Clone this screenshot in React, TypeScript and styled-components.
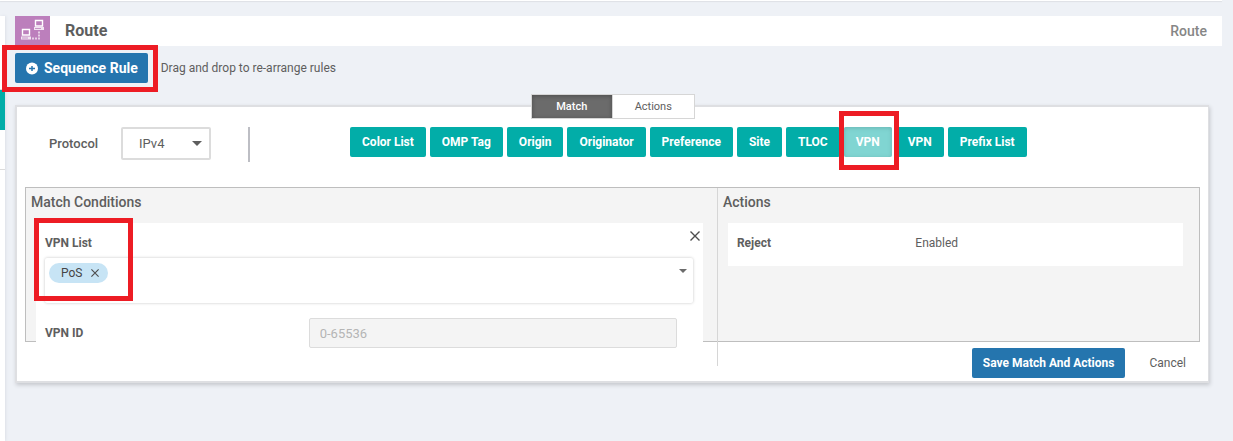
import React from "react";
import styled, { createGlobalStyle, css } from "styled-components";

const GlobalStyle = createGlobalStyle`
  * { box-sizing: border-box; }
  html, body, #root { min-height: 100%; }
  body {
    margin: 0;
    background: #eef1f6;
    color: #5e5e5e;
    font-family: Roboto, "Liberation Sans", sans-serif;
    font-size: 13px;
    line-height: 16px;
  }
  button, input, select { font: inherit; color: inherit; margin: 0; }
  h1, h2, p { margin: 0; }
`;

const Page = styled.div`
  display: grid;
  grid-template-columns: 5px minmax(0, 1fr);
  grid-template-rows: 1px auto;
  column-gap: 10px;
  row-gap: 15px;
  min-height: 100vh;
  padding-right: 11px;
`;

const TopEdge = styled.div`
  grid-column: 1 / -1;
  background: #fff;
  box-shadow: 0 1px 1px #dcdfe4;
`;

const SequenceList = styled.aside`
  display: flex;
  flex-direction: column;
  background: #fff;
  box-shadow: 1px 0 3px #dde1e7;
`;

const SequenceItem = styled.div<{ $height: number; $active?: boolean }>`
  height: ${(p) => p.$height}px;
  border-bottom: 1px solid ${(p) => (p.$active ? "#02ada8" : "#dcdcdc")};
  background: ${(p) => (p.$active ? "#02ada8" : "#fff")};
`;

const Main = styled.main`
  min-width: 0;
`;

const Header = styled.header`
  display: flex;
  align-items: center;
  height: 30px;
  padding-right: 15px;
  background: #fff;
`;

const HeaderIcon = styled.svg`
  width: 35px;
  height: 30px;
  margin-right: 15px;
  background: #bc7fbc;
`;

const Title = styled.h1`
  flex: 1;
  font-size: 16px;
  font-weight: 700;
  line-height: 20px;
`;

const HeaderType = styled.span`
  font-size: 14px;
  font-weight: 500;
  color: #868686;
`;

const Toolbar = styled.div`
  display: flex;
  align-items: center;
  gap: 13px;
  margin-top: 7px;
`;

const Marked = styled.div`
  position: relative;
  display: flex;
`;

const Highlight = styled.span<{ $inset: string; $width?: number }>`
  position: absolute;
  z-index: 2;
  inset: ${(p) => p.$inset};
  width: ${(p) => (p.$width ? `${p.$width}px` : "auto")};
  border: 5px solid #ed1c24;
  pointer-events: none;
`;

const PrimaryButton = styled.button<{ $large?: boolean }>`
  display: flex;
  align-items: center;
  gap: 6px;
  height: 30px;
  padding: 0 ${(p) => (p.$large ? 10 : 11)}px;
  border: 0;
  border-radius: 2px;
  background: #2575ae;
  color: #fff;
  font-size: ${(p) => (p.$large ? 14 : 12)}px;
  font-weight: 700;
  white-space: nowrap;
`;

const Hint = styled.p`
  font-size: 12px;
`;

const Card = styled.section`
  margin: 22px 13px 0 0;
  border: 2px solid #dedfe2;
  border-right-width: 1px;
  background: #fff;
  box-shadow: 1px 2px 4px #c4c7cc;
`;

const Tabs = styled.div`
  display: flex;
  width: 164px;
  height: 25px;
  margin: -13px auto 0;
  border: 1px solid #d6d6d6;
`;

const Tab = styled.button<{ $active?: boolean }>`
  flex: 1;
  padding: 0;
  border: 0;
  background: #fff;
  font-size: 11px;
  ${(p) =>
    p.$active &&
    css`
      border-right: 1px solid #d6d6d6;
      background: #6b6b6b;
      box-shadow: inset 0 1px 4px #4d4d4d;
      color: #fff;
      font-weight: 500;
    `}
`;

const MatchBar = styled.div`
  display: flex;
  align-items: flex-start;
  margin-top: 8px;
  padding: 0 32px;
`;

const FieldLabel = styled.label`
  font-size: 13px;
  font-weight: 500;
`;

const ProtocolLabel = styled(FieldLabel)`
  width: 72px;
  line-height: 33px;
`;

const SelectBox = styled.div`
  position: relative;
  width: 90px;
`;

const Select = styled.select`
  appearance: none;
  width: 100%;
  height: 33px;
  padding: 0 16px;
  border: 2px solid #dcdcdc;
  border-radius: 2px;
  background: #fff;
`;

const SelectArrow = styled.svg`
  position: absolute;
  top: 14px;
  right: 9px;
  width: 10px;
  height: 5px;
  fill: #5e5e5e;
  pointer-events: none;
`;

const Divider = styled.span`
  width: 2px;
  height: 35px;
  margin: 0 100px 0 37px;
  background: #bdbec4;
`;

const MatchOptions = styled.div`
  display: flex;
  gap: 4px;
`;

const MatchButton = styled.button<{ $used?: boolean }>`
  height: 30px;
  padding: 0 12px;
  border: 0;
  border-radius: 2px;
  background: ${(p) => (p.$used ? "#80d5d2" : "#02ada8")};
  box-shadow: ${(p) => (p.$used ? "inset 0 1px 4px #69b6b4" : "none")};
  color: #fff;
  font-size: 12px;
  font-weight: 700;
  white-space: nowrap;
`;

const Panels = styled.div`
  display: grid;
  grid-template-columns: 589fr 411fr;
  align-items: start;
  height: 155px;
  margin: 25px 8px 0;
  border: 1px solid #bebebe;
  background: #f4f4f4;
`;

const MatchPanel = styled.section`
  padding: 6px 14px 0 5px;
`;

const ActionsPanel = styled.section`
  height: 178px;
  padding: 6px 16px 0 5px;
  border-left: 1px solid #d6d6d6;
`;

const PanelTitle = styled.h2`
  font-size: 14px;
  font-weight: 500;
  line-height: 16px;
`;

const Condition = styled.div`
  position: relative;
  margin: 13px 0 0 5px;
  padding: 12px 10px 2px 9px;
  background: #fff;
`;

const IconButton = styled.button`
  display: flex;
  padding: 0;
  border: 0;
  background: none;
  svg {
    fill: none;
    stroke: #4d4d4d;
  }
`;

const RemoveCondition = styled(IconButton)`
  position: absolute;
  top: 8px;
  right: 3px;
`;

const ListField = styled.div`
  display: flex;
  flex-direction: column;
  gap: 7px;
`;

const ConditionLabel = styled(FieldLabel)`
  font-size: 12px;
  font-weight: 700;
`;

const TokenBox = styled.div`
  display: flex;
  align-items: flex-start;
  gap: 6px;
  height: 45px;
  padding: 5px 4px;
  border-radius: 2px;
  box-shadow: 0 0 3px #c4c4c4;
`;

const Token = styled.span`
  display: flex;
  align-items: center;
  gap: 9px;
  height: 20px;
  padding: 0 9px 0 12px;
  border-radius: 10px;
  background: #c7e4f5;
  color: #454545;
  font-size: 12px;
`;

const TokenInput = styled.input`
  flex: 1;
  min-width: 0;
  height: 20px;
  padding: 0;
  border: 0;
  outline: 0;
  background: none;
`;

const OpenList = styled(IconButton)`
  padding: 6px 2px;
  svg {
    fill: #6b6b6b;
    stroke: none;
  }
`;

const IdField = styled.div`
  display: grid;
  grid-template-columns: 81fr 113fr 5fr;
  align-items: center;
  margin-top: 15px;
`;

const TextInput = styled.input`
  width: 100%;
  height: 30px;
  padding: 0 10px;
  border: 1px solid #dcdcdc;
  border-radius: 2px;
  background: #f4f4f4;
  &::placeholder { color: #b5b5b5; opacity: 1; }
`;

const ActionRow = styled.div`
  display: grid;
  grid-template-columns: 2fr 3fr;
  height: 43px;
  margin: 13px 0 0 5px;
  padding: 12px 0 0 9px;
  background: #fff;
  font-size: 12px;
`;

const ActionName = styled.span`
  font-weight: 700;
`;

const Footer = styled.footer`
  display: flex;
  justify-content: flex-end;
  gap: 14px;
  padding: 6px 12px 3px;
`;

const CancelButton = styled.button`
  height: 30px;
  padding: 0 10px;
  border: 0;
  background: none;
  font-size: 12px;
`;

const options = [
  { label: "Color List" },
  { label: "OMP Tag" },
  { label: "Origin" },
  { label: "Originator" },
  { label: "Preference" },
  { label: "Site" },
  { label: "TLOC" },
  { label: "VPN", used: true },
  { label: "VPN" },
  { label: "Prefix List" },
];

const Cross = ({ size }: { size: number }) => (
  <svg width={size} height={size} viewBox="0 0 10 10" aria-hidden="true">
    <path d="M0.5 0.5 9.5 9.5M9.5 0.5 0.5 9.5" strokeWidth="1.4" />
  </svg>
);

/* Two networked computers joined by a dotted line */
const RouteIcon = () => (
  <HeaderIcon viewBox="0 0 35 30" aria-hidden="true">
    <g fill="none" stroke="#fff" strokeWidth="1.4">
      <path d="M20.5 4.5h7v5.500h-7zM7.500 13.500h7v5.500h-7z" />
    </g>
    <g fill="#fff" opacity="0.8">
      <path d="M19 11h10v3h-10zM6 20.500h10v3h-10z" />
      <path d="M23 15.500h2v2h-2zM23 18.500h2v2h-2zM23 21.500h2v2h-2zM20 21.500h2v2h-2zM17 21.500h2v2h-2z" opacity="0.8" />
    </g>
    <path d="M20 12.500h6M7 22h6" stroke="#bc7fbc" strokeWidth="0.8" />
  </HeaderIcon>
);

const AddIcon = () => (
  <svg width="13" height="13" viewBox="0 0 13 13" aria-hidden="true">
    <circle cx="7" cy="6.500" r="6" fill="#fff" />
    <path d="M4 6.500h6M7 4v5" stroke="#2575ae" strokeWidth="1.5" />
  </svg>
);

export default function App() {
  return (
    <>
      <GlobalStyle />
      <Page>
        <TopEdge />
        <SequenceList>
          <SequenceItem $height={74} />
          <SequenceItem $height={40} $active />
          <SequenceItem $height={40} />
        </SequenceList>
        <Main>
          <Header>
            <RouteIcon />
            <Title>Route</Title>
            <HeaderType>Route</HeaderType>
          </Header>
          <Toolbar>
            <Marked>
              <PrimaryButton $large type="button">
                <AddIcon />
                Sequence Rule
              </PrimaryButton>
              <Highlight $inset="-8px -10px -9px -13px" />
            </Marked>
            <Hint>Drag and drop to re-arrange rules</Hint>
          </Toolbar>
          <Card>
            <Tabs role="tablist">
              <Tab role="tab" aria-selected="true" $active>Match</Tab>
              <Tab role="tab" aria-selected="false">Actions</Tab>
            </Tabs>
            <MatchBar>
              <ProtocolLabel htmlFor="protocol">Protocol</ProtocolLabel>
              <SelectBox>
                <Select id="protocol" defaultValue="IPv4">
                  <option>IPv4</option>
                  <option>IPv6</option>
                </Select>
                <SelectArrow viewBox="0 0 10 5" aria-hidden="true">
                  <path d="M0 0h10L5 5z" />
                </SelectArrow>
              </SelectBox>
              <Divider />
              <MatchOptions>
                {options.map(({ label, used }, i) =>
                  used ? (
                    <Marked key={i}>
                      <MatchButton type="button" $used>{label}</MatchButton>
                      <Highlight $inset="-16px -7px -13px -5px" />
                    </Marked>
                  ) : (
                    <MatchButton type="button" key={i}>{label}</MatchButton>
                  )
                )}
              </MatchOptions>
            </MatchBar>
            <Panels>
              <MatchPanel>
                <PanelTitle>Match Conditions</PanelTitle>
                <Condition>
                  <RemoveCondition type="button" aria-label="Remove condition">
                    <Cross size={10} />
                  </RemoveCondition>
                  <ListField>
                    <ConditionLabel htmlFor="vpn-list">VPN List</ConditionLabel>
                    <TokenBox>
                      <Token>
                        PoS
                        <IconButton type="button" aria-label="Remove PoS">
                          <Cross size={8} />
                        </IconButton>
                      </Token>
                      <TokenInput id="vpn-list" type="text" />
                      <OpenList type="button" aria-label="Open VPN list">
                        <svg width="8" height="4" viewBox="0 0 8 4" aria-hidden="true">
                          <path d="M0 0h8L4 4z" />
                        </svg>
                      </OpenList>
                    </TokenBox>
                  </ListField>
                  <IdField>
                    <ConditionLabel htmlFor="vpn-id">VPN ID</ConditionLabel>
                    <TextInput id="vpn-id" type="text" placeholder="0-65536" disabled />
                  </IdField>
                  <Highlight $inset="-5px auto 49px -2px" $width={99} />
                </Condition>
              </MatchPanel>
              <ActionsPanel>
                <PanelTitle>Actions</PanelTitle>
                <ActionRow>
                  <ActionName>Reject</ActionName>
                  <span>Enabled</span>
                </ActionRow>
              </ActionsPanel>
            </Panels>
            <Footer>
              <PrimaryButton type="button">Save Match And Actions</PrimaryButton>
              <CancelButton type="button">Cancel</CancelButton>
            </Footer>
          </Card>
        </Main>
      </Page>
    </>
  );
}
